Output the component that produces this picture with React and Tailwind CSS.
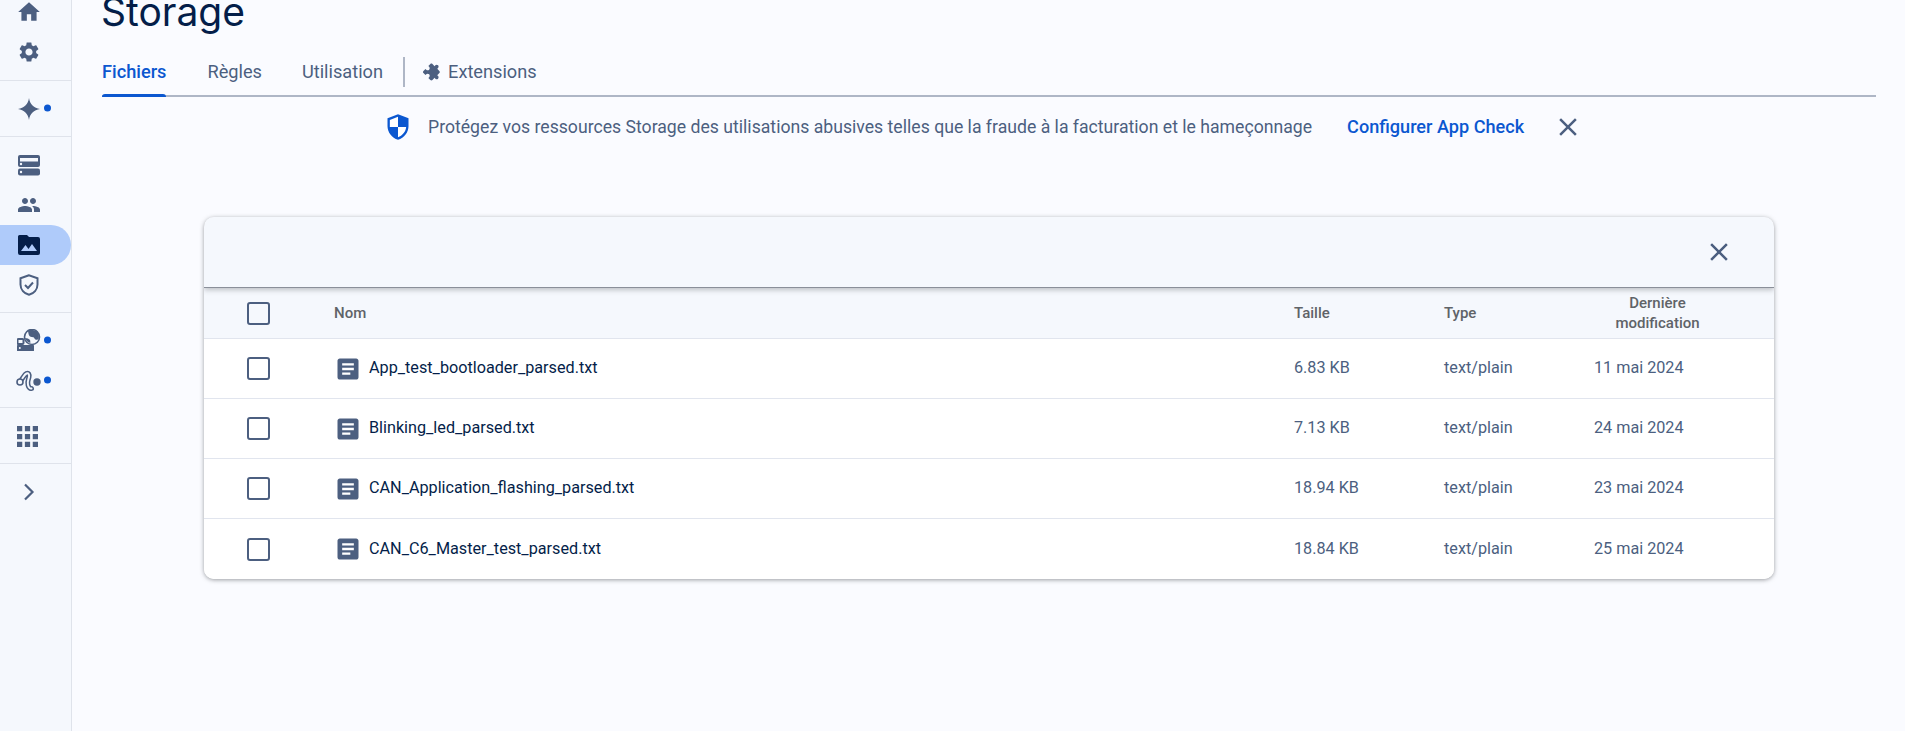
const Dot = () => <span className="absolute left-[44px] top-1/2 -translate-y-[calc(50%+1px)] w-[7px] h-[7px] rounded-full bg-[#0b57d0]" />;

const I = ({ d, s = 24, c = "#4c5f80", className = "", vb = "0 0 24 24" }) => (
  <svg width={s} height={s} viewBox={vb} fill={c} className={className}><path d={d} /></svg>
);

const P = {
  home: "M10 20v-6h4v6h5v-8h3L12 3 2 12h3v8z",
  gear: "M19.14 12.94c.04-.3.06-.61.06-.94 0-.32-.02-.64-.07-.94l2.03-1.58c.18-.14.23-.41.12-.61l-1.92-3.32c-.12-.22-.37-.29-.59-.22l-2.39.96c-.5-.38-1.03-.7-1.62-.94l-.36-2.54c-.04-.24-.24-.41-.48-.41h-3.84c-.24 0-.43.17-.47.41l-.36 2.54c-.59.24-1.13.57-1.62.94l-2.39-.96c-.22-.08-.47 0-.59.22L2.74 8.87c-.12.21-.08.47.12.61l2.03 1.58c-.05.3-.09.63-.09.94s.02.64.07.94l-2.03 1.58c-.18.14-.23.41-.12.61l1.92 3.32c.12.22.37.29.59.22l2.39-.96c.5.38 1.03.7 1.62.94l.36 2.54c.05.24.24.41.48.41h3.84c.24 0 .44-.17.47-.41l.36-2.54c.59-.24 1.13-.56 1.62-.94l2.39.96c.22.08.47 0 .59-.22l1.92-3.32c.12-.22.07-.47-.12-.61l-2.01-1.58zM12 15.6c-1.98 0-3.6-1.62-3.6-3.6s1.62-3.6 3.6-3.6 3.6 1.62 3.6 3.6-1.62 3.6-3.6 3.6z",
  spark: "M12 1C12.8 7 17 11.2 23 12 17 12.8 12.8 17 12 23 11.2 17 7 12.8 1 12 7 11.2 11.2 7 12 1Z",
  people: "M16 11c1.66 0 2.99-1.34 2.99-3S17.66 5 16 5c-1.66 0-3 1.34-3 3s1.34 3 3 3zm-8 0c1.66 0 2.99-1.34 2.99-3S9.66 5 8 5C6.34 5 5 6.34 5 8s1.34 3 3 3zm0 2c-2.33 0-7 1.17-7 3.5V19h14v-2.5c0-2.33-4.67-3.5-7-3.5zm8 0c-.29 0-.62.02-.97.05 1.16.84 1.97 1.97 1.97 3.45V19h6v-2.5c0-2.33-4.67-3.5-7-3.5z",
  apps: "M4 8h4V4H4v4zm6 12h4v-4h-4v4zm-6 0h4v-4H4v4zm0-6h4v-4H4v4zm6 0h4v-4h-4v4zm6-10v4h4V4h-4zm-6 4h4V4h-4v4zm6 6h4v-4h-4v4zm0 6h4v-4h-4v4z",
  file: "M19 3H5c-1.1 0-2 .9-2 2v14c0 1.1.9 2 2 2h14c1.1 0 2-.9 2-2V5c0-1.1-.9-2-2-2zm-5 14H7v-2h7v2zm3-4H7v-2h10v2zm0-4H7V7h10v2z",
  ext: "M20.5 11H19V7c0-1.1-.9-2-2-2h-4V3.5C13 2.12 11.88 1 10.5 1S8 2.12 8 3.5V5H4c-1.1 0-1.99.9-1.99 2v3.8H3.5c1.49 0 2.7 1.21 2.7 2.7s-1.21 2.7-2.7 2.7H2V20c0 1.1.9 2 2 2h3.8v-1.5c0-1.49 1.21-2.7 2.7-2.7 1.49 0 2.7 1.21 2.7 2.7V22H17c1.1 0 2-.9 2-2v-4h1.5c1.38 0 2.5-1.12 2.5-2.5S21.88 11 20.5 11z",
  close: "M19 6.41 17.59 5 12 10.59 6.41 5 5 6.41 10.59 12 5 17.59 6.41 19 12 13.41 17.59 19 19 17.59 13.41 12z",
};

const StorageIcon = () => (
  <svg width="24" height="24" viewBox="0 0 24 24">
    <rect x="1" y="2" width="22" height="12" rx="2" fill="#4c5f80" />
    <rect x="3" y="5" width="18" height="3.5" fill="#f5f8fd" />
    <circle cx="4" cy="11" r="1.2" fill="#f5f8fd" />
    <rect x="1" y="15.5" width="22" height="7" rx="2" fill="#4c5f80" />
    <circle cx="4" cy="19" r="1.2" fill="#f5f8fd" />
  </svg>
);

const FolderIcon = () => (
  <svg width="24" height="24" viewBox="0 0 24 24">
    <path d="M10 2H2.5A1.5 1.5 0 0 0 1 3.5V20a2 2 0 0 0 2 2h18a2 2 0 0 0 2-2V6a2 2 0 0 0-2-2H12z" fill="#041e49" />
    <path d="M4 18l4.5-6 3 4 3.5-5 5 7z" fill="#afcbfa" />
  </svg>
);

const ShieldCheck = () => (
  <svg width="24" height="24" viewBox="0 0 24 24" fill="none" stroke="#4c5f80" strokeWidth="2">
    <path d="M12 2.2 3.5 5.2v6.3c0 5 3.6 9 8.5 10.3 4.9-1.3 8.5-5.3 8.5-10.3V5.2z" />
    <path d="M8 12l3 3 5-5.5" />
  </svg>
);

const GlobeServer = () => (
  <svg width="24" height="24" viewBox="0 0 24 24">
    <rect x="0.5" y="10" width="6" height="5" rx="1" fill="none" stroke="#4c5f80" strokeWidth="2" />
    <rect x="0" y="16" width="17" height="6" rx="0.5" fill="#4c5f80" />
    <circle cx="2.8" cy="19" r="1" fill="#f5f8fd" />
    <circle cx="15" cy="8" r="7.5" fill="#f5f8fd" stroke="#4c5f80" strokeWidth="1.6" />
    <path d="M11 1.5c3-.8 7-.6 9 1.6 1.8 2 2.4 4.5 1.6 7-.7.6-2 .8-3.2.3-1-.6-1-2-2.2-2.2-2-.3-3.4-.4-4.2-2-.5-1-.8-3-1-4.7zM8 9c2 .4 4 .6 5 2 .5 1 .2 2 .4 3-2.6-.6-4.6-2.4-5.4-5z" fill="#4c5f80" />
  </svg>
);

const routePath = "M5.5 10.5 C7.5 8 8.5 5.5 10.5 4.5 C12.5 3.5 13.5 5.5 13 8 C12.5 10.5 11 13 12 16 C12.7 18.5 14 20 15.5 19.5";

const RouteIcon = () => (
  <svg width="26" height="24" viewBox="0 0 26 24" fill="none" className="-ml-[1px]">
    <path d={routePath} stroke="#4c5f80" strokeWidth="5" strokeLinecap="round" />
    <path d={routePath} stroke="#f5f8fd" strokeWidth="2" strokeLinecap="round" />
    <circle cx="4" cy="13" r="3" fill="#f5f8fd" stroke="#4c5f80" strokeWidth="1.6" />
    <circle cx="21" cy="13" r="3.7" fill="#4c5f80" />
  </svg>
);

const NavItem = ({ children, dot, active }) => (
  <div className={`relative h-10 flex items-center pl-[17px] ${active ? "bg-[#afcbfa] rounded-r-[20px] w-[71px]" : ""}`}>
    {children}
    {dot && <Dot />}
  </div>
);

const Section = ({ children, pb = "pb-[7px]", border = true }) => (
  <div className={`pt-2 ${pb} ${border ? "border-b border-[#dfe3eb]" : ""}`}>{children}</div>
);

const Sidebar = () => (
  <aside className="w-[72px] shrink-0 h-full bg-[#f5f8fd] border-r border-[#dfe3eb] overflow-hidden">
    <div className="-mt-2">
      <div className="pb-2 border-b border-[#dfe3eb] h-[89px] pt-0">
        <NavItem><I d={P.home} s={26} className="-ml-[1px]" /></NavItem>
        <NavItem><I d={P.gear} /></NavItem>
      </div>
      <Section><NavItem dot><I d={P.spark} /></NavItem></Section>
      <Section>
        <NavItem><StorageIcon /></NavItem>
        <NavItem><I d={P.people} /></NavItem>
        <NavItem active><FolderIcon /></NavItem>
        <NavItem><ShieldCheck /></NavItem>
      </Section>
      <Section pb="pb-[6px]">
        <NavItem dot><GlobeServer /></NavItem>
        <NavItem dot><RouteIcon /></NavItem>
      </Section>
      <Section><NavItem><I d={P.apps} s={21} vb="4 4 16 16" /></NavItem></Section>
      <Section border={false}>
        <NavItem>
          <svg width="24" height="24" viewBox="0 0 24 24" fill="none" stroke="#4c5f80" strokeWidth="2.2" className="-ml-[1px]"><path d="M9 4.5l7.5 7.5L9 19.5" /></svg>
        </NavItem>
      </Section>
    </div>
  </aside>
);

const Tab = ({ children, active }) => (
  <div className={`relative h-[41px] pb-[6px] flex items-center text-[18.2px] ${active ? "text-[#0b57d0] font-medium" : "text-[#4c5f80]"}`}>
    {children}
    {active && <span className="absolute left-0 right-0 -bottom-[2px] h-[3px] bg-[#0b57d0] rounded-t-sm" />}
  </div>
);

const Check = () => <span className="block w-[23px] h-[23px] border-2 border-[#4c5f80] rounded-[3px]" />;

const files = [
  ["App_test_bootloader_parsed.txt", "6.83 KB", "11 mai 2024"],
  ["Blinking_led_parsed.txt", "7.13 KB", "24 mai 2024"],
  ["CAN_Application_flashing_parsed.txt", "18.94 KB", "23 mai 2024"],
  ["CAN_C6_Master_test_parsed.txt", "18.84 KB", "25 mai 2024"],
];

const Row = ({ f, last }) => (
  <div className={`flex items-center h-[60px] bg-white ${last ? "" : "border-b border-[#e1e5ee]"}`}>
    <div className="w-[130px] pl-[43px] shrink-0"><Check /></div>
    <div className="flex-1 flex items-center gap-[7px] text-[#041e49]">
      <I d={P.file} s={28} />
      <span>{f[0]}</span>
    </div>
    <div className="w-[150px] text-[#4c5f80]">{f[1]}</div>
    <div className="w-[150px] text-[#4c5f80]">text/plain</div>
    <div className="w-[180px] text-[#4c5f80]">{f[2]}</div>
  </div>
);

export default function App() {
  return (
    <div className="h-screen flex overflow-hidden bg-[#fafbff] font-['Roboto',sans-serif] text-[16.2px]">
      <Sidebar />
      <main className="flex-1 min-w-0 pl-[30px] pr-[29px]">
        <h1 className="font-['Inter',sans-serif] text-[39px] leading-[48px] text-[#041e49] -mt-[12px] -ml-[1px] h-[48px] font-normal">Storage</h1>
        <div className="mt-[18px] flex items-start h-[43px] border-b-2 border-[#aeb6c6]">
          <Tab active>Fichiers</Tab>
          <div className="w-[41px]" />
          <Tab>Règles</Tab>
          <div className="w-[40px]" />
          <Tab>Utilisation</Tab>
          <span className="ml-5 mr-[19px] mt-[3px] w-[2px] h-[30px] bg-[#aeb6c6]" />
          <Tab><I d={P.ext} s={18} className="mr-[6px] rotate-45" />Extensions</Tab>
        </div>
        <div className="mt-[7px] h-[46px] flex items-center pl-[282px] text-[17.65px] text-[#4c5f80]">
          <svg width="28" height="28" viewBox="0 0 24 24">
            <path d="M12 1 3 4.6v6.6c0 5.4 3.7 10.2 9 11.8 5.3-1.6 9-6.4 9-11.8V4.6z" fill="#0b57d0" />
            <path d="M12 3.2 5 6v6h7zM12 12v8.8c3.7-1.4 6.6-4.7 7-8.8z" fill="#fff" />
          </svg>
          <span className="ml-[16px]">Protégez vos ressources Storage des utilisations abusives telles que la fraude à la facturation et le hameçonnage</span>
          <span className="ml-[35px] text-[18.1px] text-[#0b57d0] font-medium">Configurer App Check</span>
          <I d={P.close} s={30} className="ml-[29px]" />
        </div>
        <section className="mt-[67px] w-[1570px] ml-[102px] rounded-[10px] overflow-hidden shadow-[0_1px_4px_rgba(60,64,67,0.5)] bg-white">
          <div className="h-[71px] bg-[#f5f8fd] flex items-center justify-end pr-[40px] border-b border-[#8a8f99] shadow-[0_2px_5px_rgba(60,64,67,0.3)] relative">
            <I d={P.close} s={30} />
          </div>
          <div className="flex items-center h-[51px] bg-[#f5f8fd] border-b border-[#e1e5ee] font-medium text-[15px] text-[#5f6368]">
            <div className="w-[130px] pl-[43px] shrink-0"><Check /></div>
            <div className="flex-1">Nom</div>
            <div className="w-[150px]">Taille</div>
            <div className="w-[150px]">Type</div>
            <div className="w-[180px] pr-[53px] text-center leading-5">Dernière<br />modification</div>
          </div>
          {files.map((f, i) => <Row key={f[0]} f={f} last={i === files.length - 1} />)}
        </section>
      </main>
    </div>
  );
}
